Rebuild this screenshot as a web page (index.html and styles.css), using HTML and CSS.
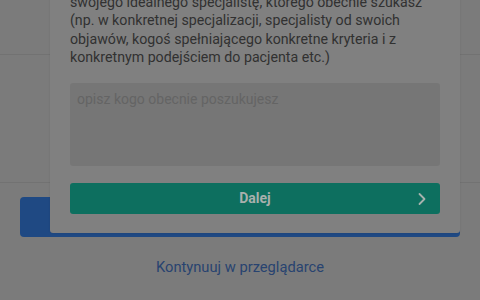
FILE: index.html
```
<!DOCTYPE html>
<html lang="pl">
<head>
<meta charset="utf-8">
<link rel="stylesheet" href="styles.css">
</head>
<body>
<div class="page">
  <div class="rule rule-top"></div>
  <div class="rule rule-bottom"></div>
  <div class="cta"></div>
  <a class="link" href="#">Kontynuuj w przeglądarce</a>

  <div class="modal">
    <p class="desc">swojego idealnego specjalistę, którego obecnie szukasz (np. w konkretnej specjalizacji, specjalisty od swoich objawów, kogoś spełniającego konkretne kryteria i z konkretnym podejściem do pacjenta etc.)</p>
    <div class="field">opisz kogo obecnie poszukujesz</div>
    <button class="next">
      <span class="next-label">Dalej</span>
      <svg class="chev" width="10" height="14" viewBox="0 0 10 14"><path d="M2.5 2 L7.5 7 L2.5 12" fill="none" stroke="#a7b2ae" stroke-width="1.8" stroke-linecap="round" stroke-linejoin="round"/></svg>
    </button>
  </div>
</div>
</body>
</html>
```
FILE: styles.css
```
html, body {
  margin: 0;
  padding: 0;
  width: 480px;
  height: 300px;
  overflow: hidden;
  background: #7b7b7b;
  font-family: Roboto, "Liberation Sans", sans-serif;
}
.page {
  position: relative;
  width: 480px;
  height: 300px;
  display: flex;
  flex-direction: column;
}
.rule {
  height: 1px;
  background: #727272;
}
.rule-top {
  margin-top: 54px;
}
.rule-bottom {
  margin-top: 127px;
}
.cta {
  margin: 14px 20px 0 20px;
  height: 40px;
  background: #1f4983;
  border-radius: 4px;
}
.link {
  margin-top: 21px;
  align-self: center;
  color: #284370;
  text-decoration: none;
  font-size: 14.7px;
  line-height: 18px;
}
.modal {
  position: absolute;
  left: 50px;
  top: -29px;
  width: 410px;
  box-sizing: border-box;
  padding: 20px 20px 19px 20px;
  background: #808080;
  border-radius: 0 0 3px 3px;
  box-shadow: 0 0 2px rgba(0,0,0,0.12);
  display: flex;
  flex-direction: column;
}
.desc {
  margin: 0;
  padding-top: 2px;
  font-size: 14.2px;
  line-height: 18.4px;
  color: #313131;
}
.field {
  margin-top: 16px;
  height: 83px;
  box-sizing: border-box;
  padding: 7px 7px;
  background: #767676;
  border-radius: 3px;
  font-size: 14px;
  line-height: 18px;
  color: #646464;
}
.next {
  margin-top: 17px;
  height: 31px;
  border: none;
  border-radius: 3px;
  background: #0d6f5f;
  display: flex;
  align-items: center;
  justify-content: center;
  position: relative;
  font-family: Roboto, "Liberation Sans", sans-serif;
  padding: 0;
}
.next-label {
  font-size: 14px;
  font-weight: bold;
  color: #a8b0ad;
}
.chev {
  position: absolute;
  right: 13px;
  top: 9px;
}
```
